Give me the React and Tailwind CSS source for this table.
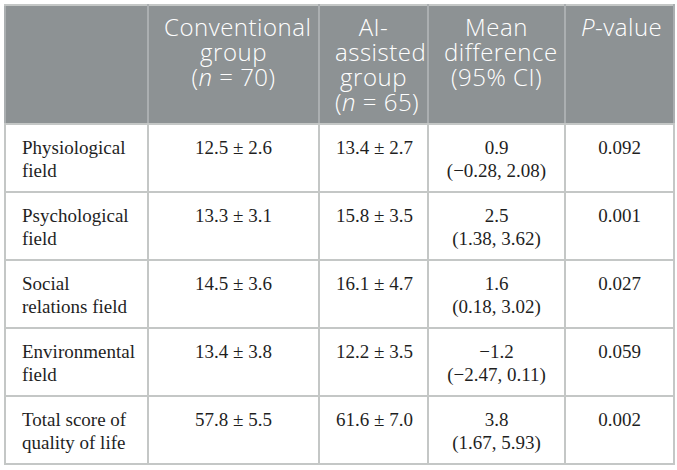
import React from "react";

const rows = [
  { label: ["Physiological", "field"], conv: "12.5 ± 2.6", ai: "13.4 ± 2.7", diff: "0.9", ci: "(−0.28, 2.08)", p: "0.092" },
  { label: ["Psychological", "field"], conv: "13.3 ± 3.1", ai: "15.8 ± 3.5", diff: "2.5", ci: "(1.38, 3.62)", p: "0.001" },
  { label: ["Social", "relations field"], conv: "14.5 ± 3.6", ai: "16.1 ± 4.7", diff: "1.6", ci: "(0.18, 3.02)", p: "0.027" },
  { label: ["Environmental", "field"], conv: "13.4 ± 3.8", ai: "12.2 ± 3.5", diff: "−1.2", ci: "(−2.47, 0.11)", p: "0.059" },
  { label: ["Total score of", "quality of life"], conv: "57.8 ± 5.5", ai: "61.6 ± 7.0", diff: "3.8", ci: "(1.67, 5.93)", p: "0.002" },
];

const th =
  "align-top text-center whitespace-nowrap px-[15px] pt-[8px] pb-[9px] h-[118px] border-2 border-[#c4c7c6] border-l-[#abafb1] border-r-[#abafb1] font-light tracking-[0.5px]";
const td = "align-top whitespace-nowrap px-4 pt-[11px] pb-[9px] border-2 border-[#c4c7c6]";

export default function App() {
  return (
    <div className="w-[677px] h-[470px] bg-white p-[4px]">
      <table
        className="table-fixed border-collapse w-[669px] border-2 border-[#c4c7c6]"
        style={{ fontFamily: "'Liberation Serif', serif" }}
      >
        <colgroup>
          <col className="w-[143px]" />
          <col className="w-[171px]" />
          <col className="w-[109px]" />
          <col className="w-[137px]" />
          <col className="w-[109px]" />
        </colgroup>
        <thead>
          <tr
            className="bg-[#8d9294] text-white text-[24px] leading-[25px]"
            style={{ fontFamily: "'Open Sans', sans-serif" }}
          >
            <th className={th}></th>
            <th className={th}>
              Conventional
              <br />
              group
              <br />(<i>n</i>&nbsp;=&nbsp;70)
            </th>
            <th className={th}>
              AI-
              <br />
              assisted
              <br />
              group
              <br />(<i>n</i>&nbsp;=&nbsp;65)
            </th>
            <th className={th}>
              Mean
              <br />
              difference
              <br />
              (95% CI)
            </th>
            <th className={th}>
              <i>P</i>-value
            </th>
          </tr>
        </thead>
        <tbody className="text-[19px] leading-[23px] text-[#1f1f1f]">
          {rows.map((r) => (
            <tr key={r.label[0]} className="h-[68px]">
              <td className={td + " text-left"}>
                <div>{r.label[0]}</div>
                <div>{r.label[1]}</div>
              </td>
              <td className={td + " text-center"}>{r.conv}</td>
              <td className={td + " text-center"}>{r.ai}</td>
              <td className={td + " text-center"}>
                <div>{r.diff}</div>
                <div>{r.ci}</div>
              </td>
              <td className={td + " text-center"}>{r.p}</td>
            </tr>
          ))}
        </tbody>
      </table>
    </div>
  );
}
